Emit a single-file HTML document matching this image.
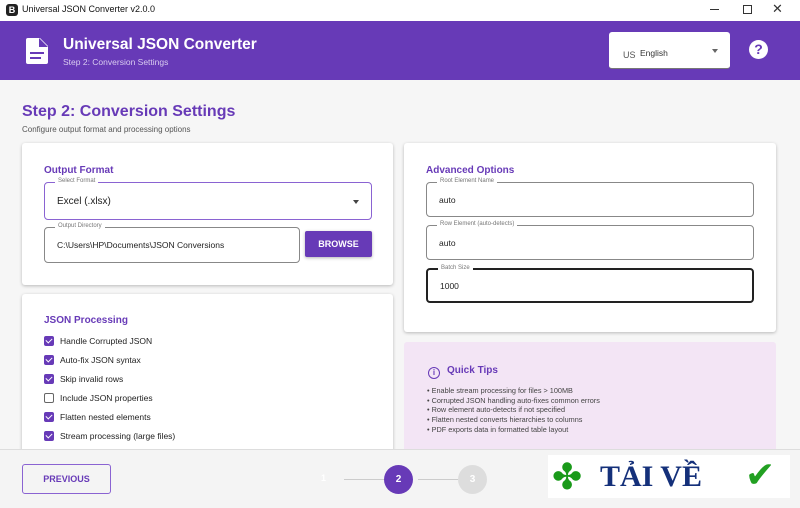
<!DOCTYPE html><html><head><style>
*{box-sizing:border-box;margin:0;padding:0}
body{width:800px;height:508px;overflow:hidden;background:#f6f6f6;font-family:"Liberation Sans",sans-serif;position:relative;color:#333}
.a{position:absolute}
.card{position:absolute;background:#fff;border-radius:3px;box-shadow:0 1px 3px rgba(0,0,0,.25)}
.h{color:#673ab7;font-weight:bold;font-size:10px}
.fld{position:absolute;border:1px solid #888;border-radius:4px;font-size:9px;padding-left:12px;display:flex;align-items:center;color:#222}
.lbl{position:absolute;top:-5px;left:10px;background:#fff;padding:0 3px;font-size:6px;color:#777}
.cb{display:flex;align-items:center;font-size:8.5px;height:19px;color:#222}
.cb i{width:10px;height:10px;border-radius:2px;background:#673ab7;margin-right:6px;display:inline-block;position:relative}
.cb i.off{background:#fff;border:1.5px solid #666}
.cb i:not(.off):after{content:"";position:absolute;left:3px;top:1px;width:3px;height:5px;border:solid #fff;border-width:0 1.5px 1.5px 0;transform:rotate(45deg)}
</style></head><body>
<div class="a" style="left:0;top:0;width:800px;height:21px;background:#fff"></div>
<div class="a" style="left:6px;top:4px;width:12px;height:12px;background:#222;border-radius:3px;color:#fff;font-size:9px;font-weight:bold;text-align:center;line-height:12px">B</div>
<div class="a" style="left:22px;top:4px;font-size:9px;color:#111">Universal JSON Converter v2.0.0</div>
<div class="a" style="left:710px;top:9px;width:9px;height:1px;background:#333"></div>
<div class="a" style="left:743px;top:5px;width:9px;height:9px;border:1px solid #333"></div>
<div class="a" style="left:772px;top:1px;font-size:13px;color:#333">✕</div>
<div class="a" style="left:0;top:21px;width:800px;height:59px;background:#673ab7"></div>
<svg class="a" style="left:26px;top:38px" width="22" height="26" viewBox="0 0 22 26"><path d="M2 0h12l8 8v16a2 2 0 0 1-2 2H2a2 2 0 0 1-2-2V2a2 2 0 0 1 2-2z" fill="#fff"/><path d="M13 0v9h9" fill="#673ab7"/><rect x="4" y="14" width="14" height="2" fill="#673ab7"/><rect x="4" y="19" width="11" height="2" fill="#673ab7"/></svg>
<div class="a" style="left:63px;top:36px;color:#fff;font-size:15.5px;font-weight:bold">Universal JSON Converter</div>
<div class="a" style="left:63px;top:57px;color:#d9ccf0;font-size:8.5px">Step 2: Conversion Settings</div>
<div class="a" style="left:609px;top:32px;width:121px;height:37px;background:#fff;border-radius:3px;border-bottom:1px solid #777"></div>
<div class="a" style="left:623px;top:50px;font-size:9px;color:#555">US</div>
<div class="a" style="left:640px;top:48px;font-size:8.5px;color:#333">English</div>
<div class="a" style="left:712px;top:49px;border:3px solid transparent;border-top:4px solid #666"></div>
<div class="a" style="left:749px;top:40px;width:19px;height:19px;border-radius:50%;background:#fff;color:#673ab7;font-weight:bold;font-size:14px;text-align:center;line-height:19px">?</div>
<div class="a" style="left:22px;top:103px;color:#673ab7;font-size:16px;font-weight:bold">Step 2: Conversion Settings</div>
<div class="a" style="left:22px;top:125px;font-size:8px;color:#555">Configure output format and processing options</div>

<div class="card" style="left:22px;top:143px;width:371px;height:142px">
<div class="a h" style="left:22px;top:22px">Output Format</div>
<div class="fld" style="left:22px;top:39px;width:328px;height:38px;border-color:#8a63d2;font-size:10px"><span class="lbl">Select Format</span>Excel (.xlsx)<span class="a" style="right:12px;top:17px;border:3px solid transparent;border-top:4px solid #444"></span></div>
<div class="fld" style="left:22px;top:84px;width:256px;height:36px;font-size:8.5px"><span class="lbl">Output Directory</span>C:\Users\HP\Documents\JSON Conversions</div>
<div class="a" style="left:283px;top:88px;width:67px;height:26px;background:#673ab7;color:#fff;font-size:9px;font-weight:bold;text-align:center;line-height:26px;border-radius:2px;box-shadow:0 1px 3px rgba(0,0,0,.3)">BROWSE</div>
</div>
<div class="card" style="left:22px;top:294px;width:371px;height:160px;padding:21px 0 0 22px">
<div class="h" style="margin-bottom:5px">JSON Processing</div>
<div class="cb"><i></i>Handle Corrupted JSON</div>
<div class="cb"><i></i>Auto-fix JSON syntax</div>
<div class="cb"><i></i>Skip invalid rows</div>
<div class="cb"><i class="off"></i>Include JSON properties</div>
<div class="cb"><i></i>Flatten nested elements</div>
<div class="cb"><i></i>Stream processing (large files)</div>
</div>
<div class="card" style="left:404px;top:143px;width:372px;height:189px">
<div class="a h" style="left:22px;top:22px">Advanced Options</div>
<div class="fld" style="left:22px;top:39px;width:328px;height:35px;font-size:8.5px"><span class="lbl">Root Element Name</span>auto</div>
<div class="fld" style="left:22px;top:82px;width:328px;height:35px;font-size:8.5px"><span class="lbl">Row Element (auto-detects)</span>auto</div>
<div class="fld" style="left:22px;top:125px;width:328px;height:35px;font-size:8.5px;border:2px solid #222"><span class="lbl">Batch Size</span>1000</div>
</div>
<div class="a" style="left:404px;top:342px;width:372px;height:110px;background:#f3e5f5;border-radius:3px">
<div class="a" style="left:24px;top:25px;width:12px;height:12px;border:1.5px solid #673ab7;border-radius:50%;color:#673ab7;font-size:8px;text-align:center;line-height:9px;font-weight:bold">i</div>
<div class="a h" style="left:43px;top:23px">Quick Tips</div>
<div class="a" style="left:23px;top:44px;font-size:7.3px;line-height:9.7px;color:#444">• Enable stream processing for files &gt; 100MB<br>• Corrupted JSON handling auto-fixes common errors<br>• Row element auto-detects if not specified<br>• Flatten nested converts hierarchies to columns<br>• PDF exports data in formatted table layout</div>
</div>
<div class="a" style="left:0;top:449px;width:800px;height:59px;background:#f4f4f4;border-top:1px solid #ddd"></div>
<div class="a" style="left:22px;top:464px;width:89px;height:30px;border:1px solid #8a63d2;border-radius:3px;color:#673ab7;font-size:9px;font-weight:bold;text-align:center;line-height:28px">PREVIOUS</div>
<div class="a" style="left:321px;top:473px;font-size:9px;color:#fff;font-weight:bold">1</div>
<div class="a" style="left:344px;top:479px;width:40px;height:1px;background:#ccc"></div>
<div class="a" style="left:384px;top:465px;width:29px;height:29px;border-radius:50%;background:#673ab7;color:#fff;font-weight:bold;font-size:10px;text-align:center;line-height:29px">2</div>
<div class="a" style="left:418px;top:479px;width:40px;height:1px;background:#ccc"></div>
<div class="a" style="left:458px;top:465px;width:29px;height:29px;border-radius:50%;background:#ddd;color:#fff;font-weight:bold;font-size:10px;text-align:center;line-height:29px">3</div>
<div class="a" style="left:548px;top:455px;width:242px;height:43px;background:#fff"></div>
<div class="a" style="left:552px;top:455px;font-size:36px;color:#1a9a1a;line-height:43px">✤</div>
<div class="a" style="left:600px;top:458px;font-family:'Liberation Serif',serif;font-size:30px;font-weight:bold;color:#14307a;line-height:38px">TẢI VỀ</div>
<div class="a" style="left:745px;top:453px;font-size:36px;color:#22a022;line-height:43px">✔</div>
</body></html>
